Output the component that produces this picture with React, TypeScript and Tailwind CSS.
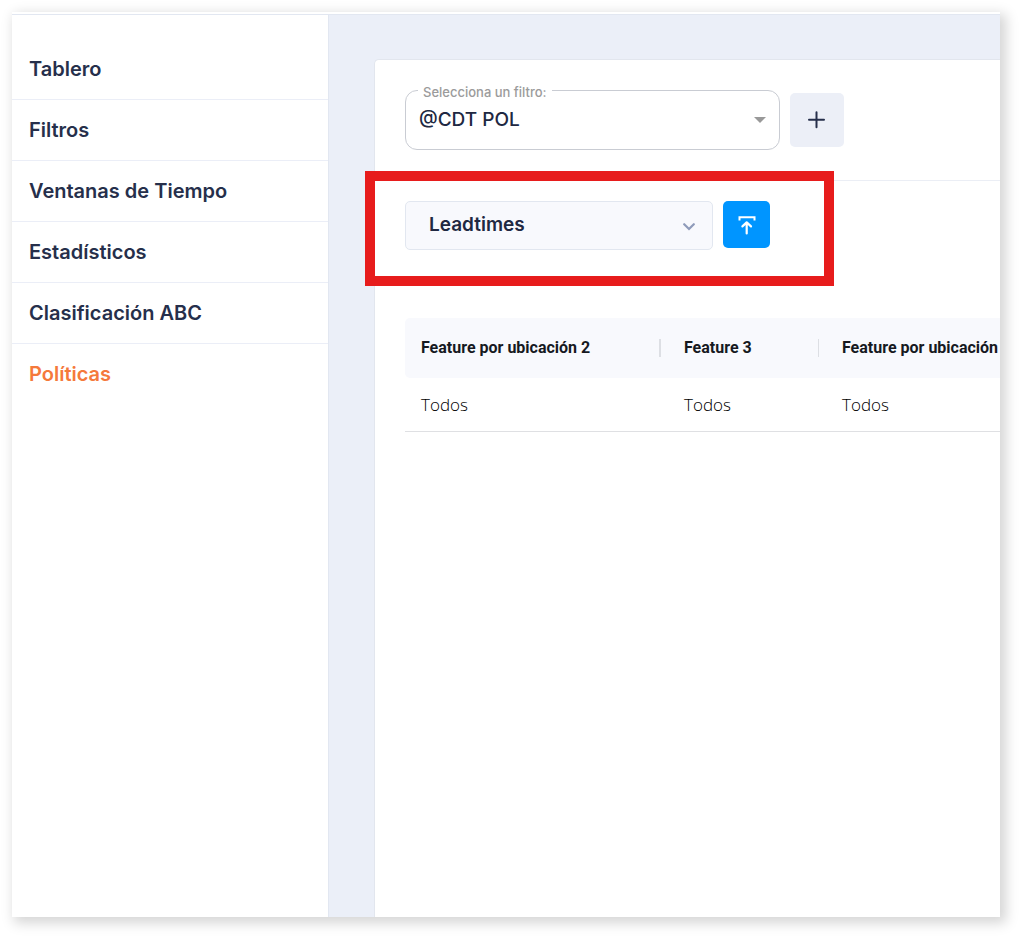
import { useState } from "react";

const menuItems = [
  "Tablero",
  "Filtros",
  "Ventanas de Tiempo",
  "Estadísticos",
  "Clasificación ABC",
  "Políticas",
];

const columns = [
  { title: "Feature por ubicación 2", width: "w-[263px]", line: "w-[2px]" },
  { title: "Feature 3", width: "w-[158px]", line: "w-px" },
  { title: "Feature por ubicación", width: "w-[263px]", line: "w-px" },
];

function Sidebar() {
  const [active, setActive] = useState("Políticas");
  return (
    <nav className="w-[317px] shrink-0 border-r border-[#e2e7f1] pt-6">
      <ul className="divide-y divide-[#ebeef7]">
        {menuItems.map((item) => (
          <li key={item}>
            <a
              href="#"
              onClick={() => setActive(item)}
              className={`flex h-[60px] items-center pl-[17px] text-xl font-semibold ${
                item === active ? "text-[#f5793b]" : "text-[#262f4b]"
              }`}
            >
              {item}
            </a>
          </li>
        ))}
      </ul>
    </nav>
  );
}

function FilterBar() {
  return (
    <div className="flex items-center gap-[10px] border-b border-[#ebeef5] px-[30px] py-[30px]">
      <div className="relative w-[375px]">
        <label
          htmlFor="filtro"
          className="absolute -top-2 left-[13px] bg-white px-[5px] text-[13px] leading-5 font-medium text-[#9b9b9b]"
        >
          Selecciona un filtro:
        </label>
        <select
          id="filtro"
          className="h-[60px] w-full appearance-none rounded-xl border border-[#c9ccd3] bg-transparent pl-[13px] text-[19px] font-medium text-[#202842]"
        >
          <option>@CDT POL</option>
        </select>
        <svg
          viewBox="0 0 12 6"
          className="pointer-events-none absolute top-[27px] right-[14px] h-[6px] w-3"
        >
          <path d="M0 0h12L6 6z" fill="#999" />
        </svg>
      </div>
      <button
        aria-label="Agregar filtro"
        className="flex size-[54px] items-center justify-center rounded-[5px] bg-[#eceff7]"
      >
        <svg viewBox="0 0 18 18" className="size-[18px]">
          <path
            d="M8.5 1.2v15M1 8.7h15"
            stroke="#262f4b"
            strokeWidth="2"
            strokeLinecap="round"
          />
        </svg>
      </button>
    </div>
  );
}

function PolicyBar() {
  return (
    <div className="relative mx-[30px] mt-5 flex w-fit items-start gap-[10px]">
      <div className="relative w-[308px]">
        <select
          aria-label="Política"
          className="h-[49px] w-full appearance-none rounded-[5px] border border-[#e2e7f0] bg-[#f8f9fd] pl-[23px] text-[19px] font-semibold text-[#202842]"
        >
          <option>Leadtimes</option>
        </select>
        <svg
          viewBox="0 0 12 8"
          className="pointer-events-none absolute top-[22px] right-[18px] h-2 w-3"
        >
          <path
            d="M1.2 1.2L6 6l4.8-4.8"
            fill="none"
            stroke="#8f9bba"
            strokeWidth="2.2"
            strokeLinecap="round"
          />
        </svg>
      </div>
      <button
        aria-label="Subir archivo"
        className="flex size-[47px] items-center justify-center rounded-[5px] bg-[#0095ff]"
      >
        <svg viewBox="0 0 18 20" className="h-5 w-[18px]" fill="none" stroke="#fff">
          <path d="M1.5 5.5V2.2h15v3.3" strokeWidth="2" />
          <path
            d="M8.7 18.5V8M4.4 11.4L8.7 7.4l4.3 4"
            strokeWidth="2.2"
            strokeLinecap="round"
            strokeLinejoin="round"
          />
        </svg>
      </button>
      <div className="pointer-events-none absolute -top-[30px] -right-16 -bottom-9 -left-10 border-[10px] border-[#e71c1c]" />
    </div>
  );
}

function PolicyTable() {
  return (
    <div className="mt-[68px] ml-[30px] overflow-hidden">
      <table className="w-[684px] table-fixed text-left">
        <thead className="bg-[#f8f9fd]">
          <tr className="h-[60px]">
            {columns.map((col) => (
              <th
                key={col.title}
                className={`${col.width} pr-[7px] pl-4 first:rounded-l-[5px]`}
              >
                <div className="flex items-center justify-between font-[Roboto] text-base font-bold whitespace-nowrap text-[#16191f]">
                  {col.title}
                  <span className={`${col.line} h-[18px] bg-[#dddfe4]`} />
                </div>
              </th>
            ))}
          </tr>
        </thead>
        <tbody>
          <tr className="h-[53px] border-b border-[#dfe0e3]">
            {columns.map((col) => (
              <td
                key={col.title}
                className="pl-4 font-['Open_Sans'] text-[17px] font-light text-black"
              >
                Todos
              </td>
            ))}
          </tr>
        </tbody>
      </table>
    </div>
  );
}

export default function App() {
  return (
    <div className="flex min-h-screen bg-white pt-3 pr-5 pb-5 pl-3 font-[Inter,sans-serif]">
      <div className="flex min-w-0 flex-1 flex-col bg-white pt-[2px] shadow-[4px_4px_12px_2px_rgba(0,0,0,0.17)]">
        <div className="flex flex-1 border-t border-[#e2e7f1]">
          <Sidebar />
          <div className="flex min-w-0 flex-1 flex-col bg-[#ebeff8] pt-11 pl-[45px]">
            <main className="flex-1 rounded-tl-[5px] border-t border-l border-[#e2e6ee] bg-white">
              <FilterBar />
              <PolicyBar />
              <PolicyTable />
            </main>
          </div>
        </div>
      </div>
    </div>
  );
}
